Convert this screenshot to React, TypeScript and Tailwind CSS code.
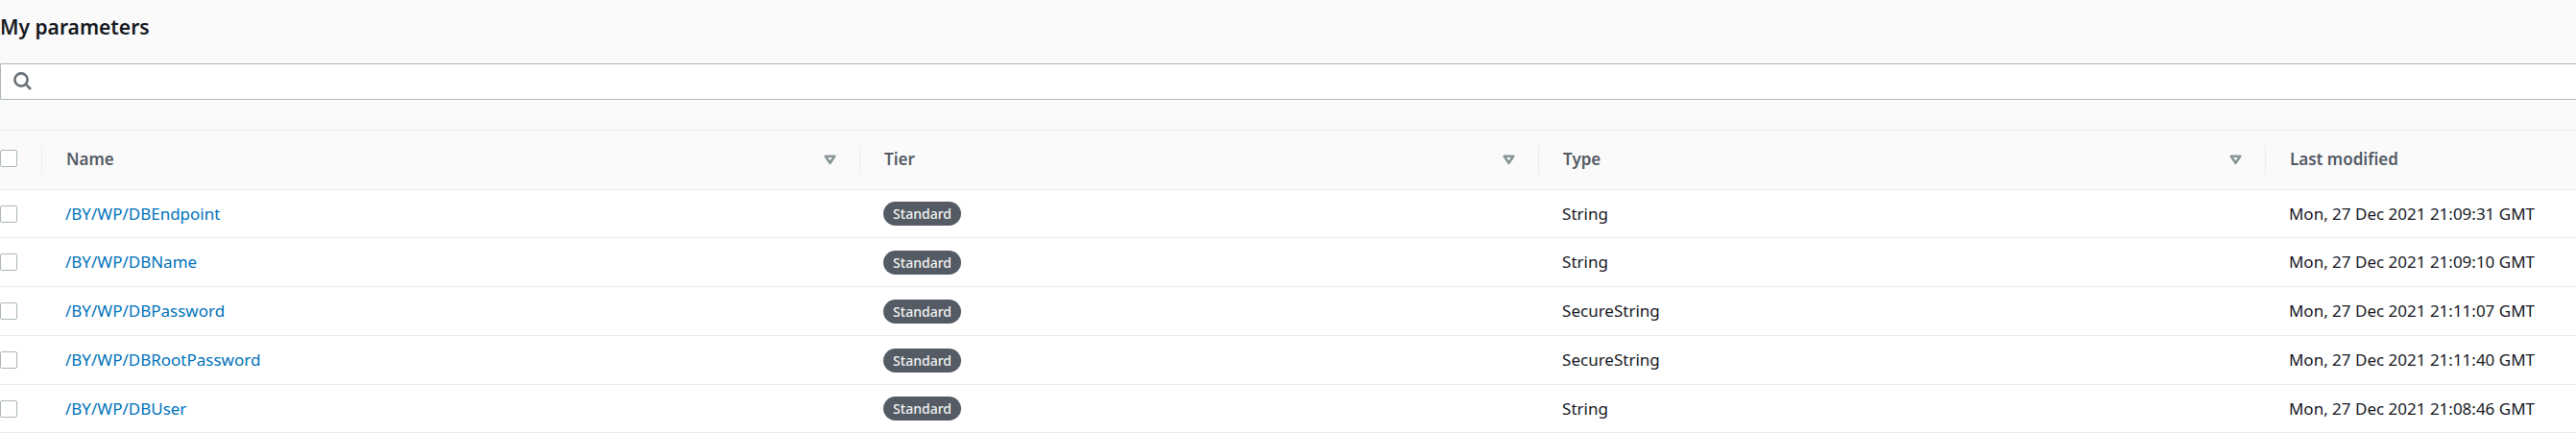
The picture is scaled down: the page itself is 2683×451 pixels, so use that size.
import React, { useState } from 'react';

interface Parameter {
  name: string;
  tier: string;
  type: string;
  lastModified: string;
}

const parameters: Parameter[] = [
  { name: '/BY/WP/DBEndpoint', tier: 'Standard', type: 'String', lastModified: 'Mon, 27 Dec 2021 21:09:31 GMT' },
  { name: '/BY/WP/DBName', tier: 'Standard', type: 'String', lastModified: 'Mon, 27 Dec 2021 21:09:10 GMT' },
  { name: '/BY/WP/DBPassword', tier: 'Standard', type: 'SecureString', lastModified: 'Mon, 27 Dec 2021 21:11:07 GMT' },
  { name: '/BY/WP/DBRootPassword', tier: 'Standard', type: 'SecureString', lastModified: 'Mon, 27 Dec 2021 21:11:40 GMT' },
  { name: '/BY/WP/DBUser', tier: 'Standard', type: 'String', lastModified: 'Mon, 27 Dec 2021 21:08:46 GMT' },
];

function SearchIcon() {
  return (
    <svg width="20" height="20" viewBox="0 0 20 20" fill="none" stroke="#687078" strokeWidth="2.6" aria-hidden="true">
      <circle cx="8" cy="8" r="6.6" />
      <path d="M12.7 12.7 18 18" />
    </svg>
  );
}

function SortIcon() {
  return (
    <svg width="13" height="11" viewBox="0 0 13 11" fill="none" stroke="#879596" strokeWidth="2.6" strokeLinejoin="round" aria-hidden="true">
      <path d="M1.8 1.8h9.4L6.5 8.8z" />
    </svg>
  );
}

function Checkbox({ label, checked, onChange }: { label: string; checked: boolean; onChange: () => void }) {
  return (
    <input
      type="checkbox"
      aria-label={label}
      checked={checked}
      onChange={onChange}
      className="block size-[18px] appearance-none rounded-xs border border-[#aab7b8] bg-white checked:border-[#0073bb] checked:bg-[#0073bb]"
    />
  );
}

function HeaderCell({ title, sortable = true }: { title: string; sortable?: boolean }) {
  return (
    <th scope="col" className="px-0 pt-0 pb-px text-left font-semibold text-[#545b64]">
      <div className="flex h-[30px] items-center justify-between border-l border-[#eaeded] pr-6 pl-[25px]">
        <span className="whitespace-nowrap">{title}</span>
        {sortable && (
          <button type="button" aria-label={`Sort by ${title}`}>
            <SortIcon />
          </button>
        )}
      </div>
    </th>
  );
}

export default function App() {
  const [selected, setSelected] = useState<string[]>([]);
  const allSelected = selected.length === parameters.length;

  const toggle = (name: string) =>
    setSelected((prev) => (prev.includes(name) ? prev.filter((n) => n !== name) : [...prev, name]));

  return (
    <main className="bg-white font-['Noto_Sans',sans-serif] text-[17px] leading-6 text-[#16191f]">
      <header className="bg-[#fafafa] pt-3 pb-[31px]">
        <h1 className="mb-[22px] text-[21px] leading-8 font-semibold">My parameters</h1>
        <label className="flex h-[38px] items-center gap-3 rounded-l-xs border border-r-0 border-[#aab7b8] bg-white pl-[13px]">
          <SearchIcon />
          <input type="text" aria-label="Search parameters" className="h-full flex-1 outline-none" />
        </label>
      </header>

      <table className="w-full table-fixed border-separate border-spacing-0">
        <colgroup>
          <col className="w-[43px]" />
          <col className="w-[31.76%]" />
          <col className="w-[26.35%]" />
          <col className="w-[28.21%]" />
          <col />
        </colgroup>
        <thead className="bg-[#fafafa]">
          <tr className="h-[63px] *:border-y *:border-[#eaeded]">
            <th scope="col" className="px-0 pt-0 pb-1">
              <Checkbox
                label="Select all"
                checked={allSelected}
                onChange={() => setSelected(allSelected ? [] : parameters.map((p) => p.name))}
              />
            </th>
            <HeaderCell title="Name" />
            <HeaderCell title="Tier" />
            <HeaderCell title="Type" />
            <HeaderCell title="Last modified" sortable={false} />
          </tr>
        </thead>
        <tbody>
          {parameters.map((p) => (
            <tr key={p.name} className="h-[51px] *:border-b *:border-[#eaeded] first:h-[50px] last:h-[50px]">
              <td className="p-0">
                <Checkbox label={`Select ${p.name}`} checked={selected.includes(p.name)} onChange={() => toggle(p.name)} />
              </td>
              <td className="py-0 pr-6 pl-[25px]">
                <a href="#" className="text-[#0073bb] hover:underline">{p.name}</a>
              </td>
              <td className="py-0 pr-6 pl-[25px]">
                <span className="block w-fit rounded-full bg-[#545b64] px-[10px] text-sm leading-[25px] font-medium text-[#f2f3f3]">{p.tier}</span>
              </td>
              <td className="py-0 pr-6 pl-[25px]">{p.type}</td>
              <td className="py-0 pl-[25px] whitespace-nowrap">{p.lastModified}</td>
            </tr>
          ))}
        </tbody>
      </table>
    </main>
  );
}
